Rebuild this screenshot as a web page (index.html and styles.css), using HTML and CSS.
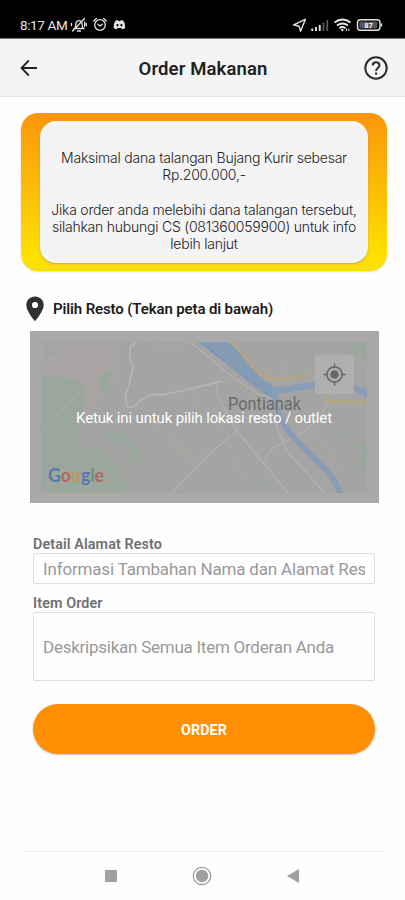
FILE: index.html
```html
<!DOCTYPE html>
<html lang="id">
<head>
<meta charset="utf-8">
<title>Order Makanan</title>
<link rel="stylesheet" href="styles.css">
</head>
<body>
<div class="status">
  <span class="time">8:17 AM</span>
  <svg class="st-left" viewBox="70 16 58 18" width="58" height="18" fill="none" stroke="#e4e4e4" stroke-width="1.3" stroke-linecap="round">
    <path d="M74.5 28.5c1.5-1.2 1-3.500 1.400-5 .5-1.800 1.600-2.800 3.100-2.800 2 0 3 1.600 3.100 3.700 0 2 .3 3 1.500 4.100zM77.500 31h3M72.600 31L84.500 18.500M71.500 23.500v2M86.300 23.500v2M84.600 22v4.500"/>
    <circle cx="100" cy="25" r="5.300"/><path d="M98 24.200l2 1.700 2.300-1.700M93.800 21l2.600-2.500M106.200 21l-2.600-2.500"/>
    <path fill="#e4e4e4" stroke="none" d="M115.400 20.700l2.500-.6.500.8h2l.5-.8 2.500.6c1.200 2 1.900 4.500 1.700 7.200-1 .9-2 1.200-3 1.400l-.8-1.300h-3.800l-.8 1.300c-1-.2-2-.5-3-1.400-.2-2.700.6-5.200 1.700-7.200z"/>
    <g fill="#000" stroke="none"><circle cx="117.500" cy="25.200" r="1.100"/><circle cx="121.400" cy="25.200" r="1.100"/></g>
  </svg>
  <svg class="st-right" viewBox="292 16 92 18" width="92" height="18" fill="none" stroke="#e4e4e4" stroke-width="1.400" stroke-linejoin="round">
    <path d="M305.400 19.300l-11.800 5.500 5.500 1.400 1.500 5z"/>
    <g stroke="none"><g fill="#e4e4e4"><rect x="311.300" y="28.500" width="1.900" height="2.500"/><rect x="315" y="27" width="1.900" height="4"/><rect x="318.800" y="25" width="1.900" height="6"/></g><g fill="#555"><rect x="322.500" y="22.500" width="1.900" height="8.500"/><rect x="326.300" y="20" width="1.900" height="11"/></g></g>
    <g stroke-width="1.900"><path d="M334.500 22.600q8-6.200 16 0M337 25.600q5.500-4.200 11 0M339.400 28.200q3-2.300 6 0"/></g>
    <circle cx="342.300" cy="30" r="1.200" fill="#e4e4e4" stroke="none"/><path d="M346.500 28.500v2.500M348.800 31v-2.500" stroke-width="1"/>
    <rect x="357.500" y="19.700" width="22.500" height="10.600" rx="3"/><path d="M381.400 23.500v3"/>
    <rect x="359.300" y="21.500" width="18" height="7" rx="1" fill="#555" stroke="none"/>
    <text x="368.500" y="28" class="batt">87</text>
  </svg>
</div>
<header class="bar">
  <svg class="back" viewBox="0 0 18 18" width="18" height="18" fill="none" stroke="#222" stroke-width="1.800"><path d="M17 9H1.600M8.800 1.500L1.500 9l7.300 7.500"/></svg>
  <h1>Order Makanan</h1>
  <svg class="help" viewBox="0 0 24 24" width="24" height="24" fill="none" stroke="#2b2b2b" stroke-width="2"><circle cx="12" cy="12" r="10.700"/><path d="M8.700 9.400c0-4.200 6.700-4.200 6.700 0 0 2.600-3.300 2.600-3.300 5.500M12.100 16.500v2.200"/></svg>
</header>
<main>
  <section class="banner"><div class="notice">
    <p><span>Maksimal dana talangan Bujang Kurir sebesar</span><br><span>Rp.200.000,-</span></p>
    <p><span>Jika order anda melebihi dana talangan tersebut,</span><br><span>silahkan hubungi CS (081360059900) untuk info</span><br><span>lebih lanjut</span></p>
  </div></section>
  <div class="pick">
    <svg viewBox="0 0 18 26" width="18" height="26"><path fill="#303030" fill-rule="evenodd" d="M9 .5C4 .5.300 4.200.300 9c0 6.200 8.700 16.300 8.700 16.300S17.700 15.200 17.700 9C17.700 4.200 14 .5 9 .5zM9 5.900a3.100 3.100 0 1 1 0 6.200 3.100 3.100 0 0 1 0-6.200z"/></svg>
    <h2>Pilih Resto (Tekan peta di bawah)</h2>
  </div>
  <div class="map">
    <svg viewBox="41 342 326 151" width="326" height="151" fill="none">
      <rect x="41" y="342" width="326" height="151" fill="#a4a4a4"/>
      <path fill="#a7a4a3" d="M41 342h82l-8 42-28 30-5 36-41-10z"/>
      <g fill="#9ba79d">
        <path d="M41 376l22 0 10 5 9 1 1 19-2 49 16-2 16 11 11 17 3 17H41z"/>
        <path d="M101 376l9-7 2 6-4 8 3 6-6 6-6-9zM105 438l8-11 8 5 8 9 9 5 2 10 7 2-8 7-8-3 2-8-10-13-14 3zM351 342h16v20l-8-9-8 2zM339 430l6 4 3 8-8-3zM349 440l9 3 9-2v14l-10-6-8 1zM357 459l10-6v15l-10 1zM45 349l6-1 1 7-5 2zM291 342h5v6h-4zM261 481l6-3 4 6-6 4zM248 463l4 1-1 5-4-1z"/>
      </g>
      <g stroke="#afafaf" stroke-width="1.100">
        <path stroke="#b3b3b3" stroke-width="1.900" d="M137 342l-7 5v12l3 8-4 18-4 12 3 10h5l8-7 12-6 9 1 28-6 32-8"/>
        <path stroke="#b1b1b1" stroke-width="1.400" d="M190 342l14 11 27 23 27 18 15 5M217 383v12l20 36 51 62M237 431l-28 23-37 39M273 403l4 24 10 24 38 42M265 458l8-10 31-16 17-16 8-18"/>
        <path stroke="#a9a9a9" d="M42 432l37-39M46 487l34-32M60 342v17M68 343v16M47 360l38-3M76 350v9M154 342l8 7 18-2 8-5"/>
      </g>
      <g stroke="#aba79d" stroke-width="1.300"><path d="M149 420l10 11M173 442l27 23M180 430l-10 8M173 442l22 22M193 388l12 33M208 414l23 22M279 358l5 20M270 366l1 12M311 428l33 45M231 456l10 18 12 7M294 422l17 16"/></g>
      <path fill="#849bb5" d="M198 342h30l12 10 10 13 12 14 14 9 3 11h-6l-16-10-24-20z"/>
      <path stroke="#7f91a8" d="M202 343l30 24 27 19"/>
      <path stroke="#879db6" stroke-width="6.500" d="M269 391c18 0 26-4 46-6 22-3 39 2 53 9"/>
      <path stroke="#879db6" stroke-width="5.500" d="M275 394c0 16 8 31 18 43l34 34c8 9 10 15 14 23"/>
      <path stroke="#b6a481" stroke-width="2.500" d="M231 342c13 10 20 30 36 35 18 6 29-1 50-5M327 386l-1 15 41 1"/>
      <text x="228" y="410" class="city" textLength="73" lengthAdjust="spacingAndGlyphs">Pontianak</text>
      <text x="48" y="481.500" class="logo" textLength="56" lengthAdjust="spacingAndGlyphs"><tspan fill="#5879b0">G</tspan><tspan fill="#b36962">o</tspan><tspan fill="#bd9a57">o</tspan><tspan fill="#5879b0">g</tspan><tspan fill="#679872">l</tspan><tspan fill="#b36962">e</tspan></text>
      <rect x="315" y="355" width="39" height="39" rx="1" fill="#afafaf"/>
      <g stroke="#686868" stroke-width="1.500"><circle cx="334.500" cy="374.500" r="7.600"/><path d="M334.500 363.500v4M334.500 381.500v4M323.500 374.500h4M341.500 374.500h4"/><circle cx="334.500" cy="374.500" r="4.200" fill="#686868" stroke="none"/></g>
    </svg>
    <div class="tap"><span>Ketuk ini untuk pilih lokasi resto / outlet</span></div>
  </div>
  <form>
    <label>Detail Alamat Resto</label>
    <div class="field one"><span>Informasi Tambahan Nama dan Alamat Resto</span></div>
    <label class="second">Item Order</label>
    <div class="field many"><span>Deskripsikan Semua Item Orderan Anda</span></div>
    <button type="button">ORDER</button>
  </form>
</main>
<nav>
  <svg viewBox="0 0 12 12" width="12" height="12"><path fill="#a0a0a0" d="M0 0h12v12H0z"/></svg>
  <svg viewBox="0 0 20 20" width="20" height="20"><circle cx="10" cy="10" r="8.700" fill="none" stroke="#999" stroke-width="1.200"/><circle cx="10" cy="10" r="6.200" fill="#a0a0a0"/></svg>
  <svg viewBox="0 0 12 14" width="12" height="14"><path fill="#a0a0a0" d="M12 0v14L0 7z"/></svg>
</nav>
</body>
</html>
```

FILE: styles.css
```css
* { box-sizing: border-box; }
body { margin: 0; width: 405px; height: 900px; display: flex; flex-direction: column; background: #fefefe; font-family: Roboto, "Liberation Sans", sans-serif; overflow: hidden; }
svg { display: block; flex: none; }
h1, h2, p { margin: 0; }
span { white-space: nowrap; }
.status { height: 38px; background: #000; color: #e4e4e4; display: flex; padding: 16px 21px 0 20px; flex: none; }
.time { font-size: 13.5px; line-height: 18px; width: 50px; letter-spacing: -.38px; }
.st-right { margin-left: auto; }
.batt { font: 700 7.5px Roboto, sans-serif; fill: #fff; stroke: none; text-anchor: middle; }
.bar { height: 59px; flex: none; background: #f4f4f4; border-top: 1px solid #777; border-bottom: 1px solid #e9e9e9; display: flex; align-items: center; justify-content: space-between; padding: 0 17px 0 20px; }
h1 { font-size: 18.5px; font-weight: 600; line-height: 24px; color: #222; letter-spacing: .12px; padding: 2px 0 0 4px; }
main { flex: 1; }
.banner { width: 366px; height: 158px; margin: 16px 0 0 21px; border-radius: 17px; padding: 8px 19px 8px; background: linear-gradient(#fb960b, #fddf00 90%); box-shadow: 0 1px 2px #bbb8; }
.notice { height: 142px; width: 328px; border-radius: 16px; background: #f4f4f4; box-shadow: 0 1px 2px #8888; text-align: center; padding-top: 28px; font: 300 14px/17.3px Inter, "Liberation Sans", sans-serif; letter-spacing: -.23px; color: #222; }
.notice p + p { margin-top: 17px; }
.pick { display: flex; align-items: center; gap: 9px; height: 28px; margin: 24px 0 0 26px; }
h2 { font-size: 15px; font-weight: 600; line-height: 20px; letter-spacing: -.13px; color: #1c1c1c; }
.map { position: relative; width: 349px; height: 172px; margin: 8px 0 0 29.5px; background: #a9a9a9; padding: 11px 11.5px; }
.tap { position: absolute; inset: 0; display: flex; align-items: center; justify-content: center; color: #fff; font-size: 15px; letter-spacing: -.15px; padding-top: 1px; }
.city { font: 400 17.7px Roboto, sans-serif; fill: #6b6b6b; }
.logo { font: 700 18.5px Lato, sans-serif; }
form { margin: 32px 30px 0 33px; }
label { display: block; height: 18px; font-size: 14.3px; font-weight: 600; line-height: 18px; letter-spacing: .12px; color: #707070; }
.second { margin-top: 10px; }
.field { border: 1px solid #ddd; border-radius: 2px; padding: 0 9px; display: flex; align-items: center; color: #999; font-size: 17px; letter-spacing: -.25px; overflow: hidden; }
.one { height: 31px; letter-spacing: -.17px; }
.one span { overflow: hidden; }
.many { height: 69px; }
button { display: block; width: 342px; height: 50px; margin-top: 23px; border: 0; border-radius: 25px; background: #ff9003; color: #fff; font: 700 14.3px Roboto, sans-serif; letter-spacing: .1px; padding-top: 3px; box-shadow: 0 1px 2px #8888; }
nav { height: 49px; width: 365px; margin: 0 20px; border-top: 1px solid #f1f1f1; flex: none; display: flex; justify-content: space-between; align-items: center; padding: 0 86px 0 85px; }
```
